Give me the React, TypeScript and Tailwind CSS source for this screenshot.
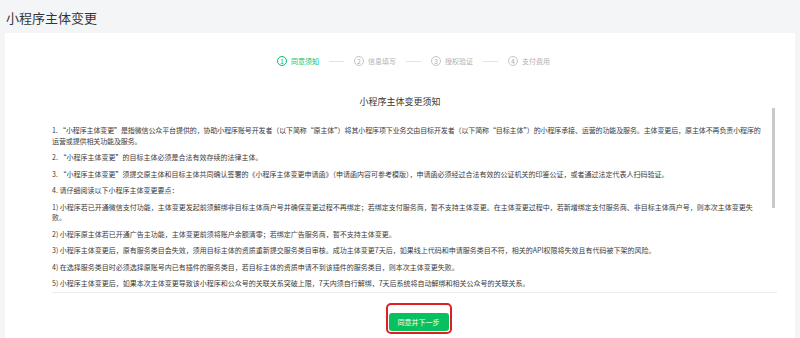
const steps = ["同意须知", "信息填写", "授权验证", "支付费用"];

const items = [
  "1. “小程序主体变更”是指微信公众平台提供的，协助小程序账号开发者（以下简称“原主体”）将其小程序项下业务交由目标开发者（以下简称“目标主体”）的小程序承接、运营的功能及服务。主体变更后，原主体不再负责小程序的运营或提供相关功能及服务。",
  "2. “小程序主体变更”的目标主体必须是合法有效存续的法律主体。",
  "3. “小程序主体变更”须提交原主体和目标主体共同确认签署的《小程序主体变更申请函》（申请函内容可参考模版），申请函必须经过合法有效的公证机关的印鉴公证，或者通过法定代表人扫码验证。",
  "4. 请仔细阅读以下小程序主体变更要点：",
  "1) 小程序若已开通微信支付功能，主体变更发起前须解绑非目标主体商户号并确保变更过程不再绑定；若绑定支付服务商，暂不支持主体变更。在主体变更过程中，若新增绑定支付服务商、非目标主体商户号，则本次主体变更失败。",
  "2) 小程序原主体若已开通广告主功能，主体变更前须将账户余额清零；若绑定广告服务商，暂不支持主体变更。",
  "3) 小程序主体变更后，原有服务类目会失效，须用目标主体的资质重新提交服务类目审核。成功主体变更7天后，如果线上代码和申请服务类目不符，相关的API权限将失效且有代码被下架的风险。",
  "4) 在选择服务类目时必须选择原账号内已有插件的服务类目，若目标主体的资质申请不到该插件的服务类目，则本次主体变更失败。",
  "5) 小程序主体变更后，如果本次主体变更导致该小程序和公众号的关联关系突破上限，7天内须自行解绑，7天后系统将自动解绑和相关公众号的关联关系。",
];

export default function App() {
  return (
    <div
      className="w-[800px] h-[338px] overflow-hidden bg-[#f4f5f7] text-[#353535]"
      style={{ fontFamily: '"Noto Sans CJK SC", "Noto Sans", sans-serif' }}
    >
      <div className="h-[33px] flex items-center pl-[6px] pt-[3px] text-[13px]">小程序主体变更</div>

      <div className="mx-[5px] h-[305px] bg-white pt-[22px]">
        {/* steps */}
        <div className="flex items-center h-[12px] ml-[272px]">
          {steps.map((s, i) => (
            <div key={s} className="flex items-center">
              {i > 0 && <div className="w-[15px] h-px bg-[#e3e3e3] mx-[10px]" />}
              <div
                className={`w-[10px] h-[10px] rounded-full border flex items-center justify-center text-[7px] leading-none ${
                  i === 0 ? "border-[#07c160] text-[#07c160]" : "border-[#c4c4c4] text-[#b2b2b2]"
                }`}
              >
                {i + 1}
              </div>
              <span className={`ml-[4px] text-[7px] ${i === 0 ? "text-[#07c160]" : "text-[#b2b2b2]"}`}>{s}</span>
            </div>
          ))}
        </div>

        <div className="mt-[29px] h-[12px] leading-[12px] text-center text-[9px] text-[#353535]">小程序主体变更须知</div>

        {/* notice scroll box */}
        <div className="relative ml-[47px] w-[725px] h-[185px] border-b border-[#ececec] overflow-hidden">
          <div className="pt-[17px] pr-[12px] text-[7px] leading-[10.5px] text-[#3a3a3a]">
            {items.map((t, i) => (
              <p key={t} className={i === 0 ? "mb-[6px] tracking-[-0.12px]" : "mb-[6px]"}>
                {t}
              </p>
            ))}
          </div>
          <div className="absolute right-[2px] top-0 w-[3px] h-[100px] bg-[#c9c9c9]" />
        </div>

        <div className="flex justify-center mt-[10px] pl-[37px]">
          <div className="rounded-[5px] border-2 border-[#e02020] p-px">
            <button className="h-[18px] px-[9px] rounded-[3px] bg-[#07c160] text-white text-[7px]">同意并下一步</button>
          </div>
        </div>
      </div>
    </div>
  );
}
